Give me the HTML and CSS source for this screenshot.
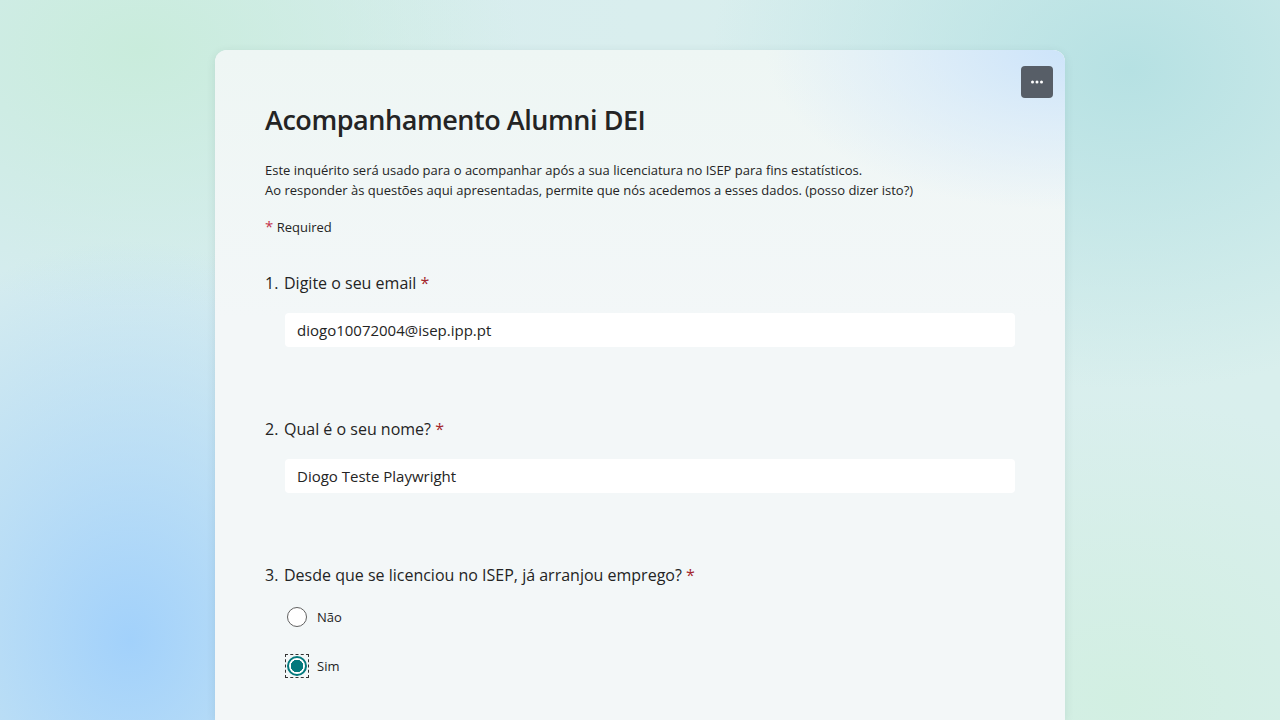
FILE: index.html
```html
<!DOCTYPE html>
<html lang="pt">
<head>
<meta charset="utf-8">
<title>Acompanhamento Alumni DEI</title>
<link rel="stylesheet" href="styles.css">
</head>
<body>
<main class="page">
  <section class="card">
    <div class="card-bg"></div>
    <button class="more" aria-label="Mais opções">
      <svg width="14" height="4" viewBox="0 0 14 4"><circle cx="2.5" cy="2" r="1.5" fill="#fff"/><circle cx="7" cy="2" r="1.5" fill="#fff"/><circle cx="11.5" cy="2" r="1.5" fill="#fff"/></svg>
    </button>
    <h1 class="title">Acompanhamento Alumni DEI</h1>
    <p class="desc">Este inquérito será usado para o acompanhar após a sua licenciatura no ISEP para fins estatísticos.<br>Ao responder às questões aqui apresentadas, permite que nós acedemos a esses dados. (posso dizer isto?)</p>
    <p class="required"><span class="star light">*</span> Required</p>

    <div class="question">
      <div class="q-title"><span class="q-num">1.</span><span>Digite o seu email <span class="star">*</span></span></div>
      <div class="input">diogo10072004@isep.ipp.pt</div>
    </div>

    <div class="question">
      <div class="q-title"><span class="q-num">2.</span><span>Qual é o seu nome? <span class="star">*</span></span></div>
      <div class="input">Diogo Teste Playwright</div>
    </div>

    <div class="question">
      <div class="q-title"><span class="q-num">3.</span><span>Desde que se licenciou no ISEP, já arranjou emprego? <span class="star">*</span></span></div>
      <div class="options">
        <div class="option"><span class="radio-wrap"><span class="radio"></span></span><span>Não</span></div>
        <div class="option"><span class="radio-wrap focus"><span class="radio checked"></span></span><span>Sim</span></div>
      </div>
    </div>
  </section>
</main>
</body>
</html>
```
FILE: styles.css
```css
html, body {
  margin: 0;
  height: 100%;
  overflow: hidden;
}
body {
  font-family: "Segoe UI", "Open Sans", "Noto Sans", sans-serif;
  color: #242424;
  background:
    radial-gradient(ellipse 330px 400px at 130px 640px, #a2d1fb 0%, rgba(168,212,250,0.6) 45%, rgba(168,212,250,0) 100%),
    radial-gradient(ellipse 420px 320px at 1130px 70px, #b6e1e3 0%, rgba(182,225,227,0) 100%),
    radial-gradient(ellipse 380px 260px at 140px 50px, #c9ecdc 0%, rgba(201,236,220,0) 100%),
    radial-gradient(ellipse 380px 300px at 1120px 700px, #d2efe2 0%, rgba(210,239,226,0) 100%),
    linear-gradient(90deg, #d5ecef 0%, #d9eeee 50%, #d9efed 100%);
}
.page {
  display: flex;
  justify-content: center;
  padding-top: 50px;
}
.card {
  position: relative;
  width: 850px;
  height: 670px;
  box-sizing: border-box;
  padding: 52px 50px 0 50px;
  border-radius: 12px 12px 0 0;
  background: #f2f7f7;
  box-shadow: 0 2px 10px rgba(0, 60, 60, 0.10);
  overflow: hidden;
}
.card-bg {
  position: absolute;
  inset: 0;
  background:
    radial-gradient(ellipse 300px 160px at 850px 0px, rgba(205,228,250,1) 0%, rgba(212,232,250,0.6) 50%, rgba(242,247,247,0) 100%),
    linear-gradient(180deg, #eef6f4 0%, #f3f7f8 40%, #f3f7f8 100%);
  z-index: 0;
}
.card > *:not(.card-bg) { position: relative; z-index: 1; }
.more {
  position: absolute !important;
  top: 16px;
  right: 12px;
  width: 32px;
  height: 32px;
  border: none;
  border-radius: 4px;
  background: #575e67;
  display: flex;
  align-items: center;
  justify-content: center;
  padding: 0;
}
.title {
  margin: 0;
  font-size: 27px;
  letter-spacing: -0.45px;
  font-weight: 600;
  line-height: 36px;
  color: #242424;
}
.desc {
  margin: 22px 0 0;
  font-size: 13px;
  line-height: 20px;
}
.required {
  margin: 17px 0 0;
  font-size: 13px;
  line-height: 20px;
}
.star { color: #a4262c; }
.star.light { color: #c4314b; font-size: 15px; line-height: 0; }
.question {
  margin-top: 34px;
  height: 112px;
}
.q-title {
  display: flex;
  gap: 5px;
  font-size: 16px;
  line-height: 24px;
}
.q-num { width: 14px; }
.input {
  margin: 18px 0 0 20px;
  height: 34px;
  box-sizing: border-box;
  background: #fff;
  border-radius: 4px;
  padding: 0 12px;
  font-size: 15px;
  line-height: 34px;
  color: #242424;
}
.options {
  margin: 18px 0 0 20px;
  display: flex;
  flex-direction: column;
  gap: 25px;
}
.option {
  display: flex;
  align-items: center;
  gap: 8px;
  font-size: 13px;
  line-height: 24px;
}
.radio-wrap {
  width: 24px;
  height: 24px;
  box-sizing: border-box;
  display: flex;
  align-items: center;
  justify-content: center;
}
.radio-wrap.focus { border: 1px dashed #333; }
.radio {
  width: 20px;
  height: 20px;
  box-sizing: border-box;
  border-radius: 50%;
  border: 1px solid #616161;
  background: #fff;
}
.radio.checked {
  border: 2px solid #03787c;
  background: radial-gradient(circle, #03787c 0 6px, #fff 6.5px 100%);
}
```
